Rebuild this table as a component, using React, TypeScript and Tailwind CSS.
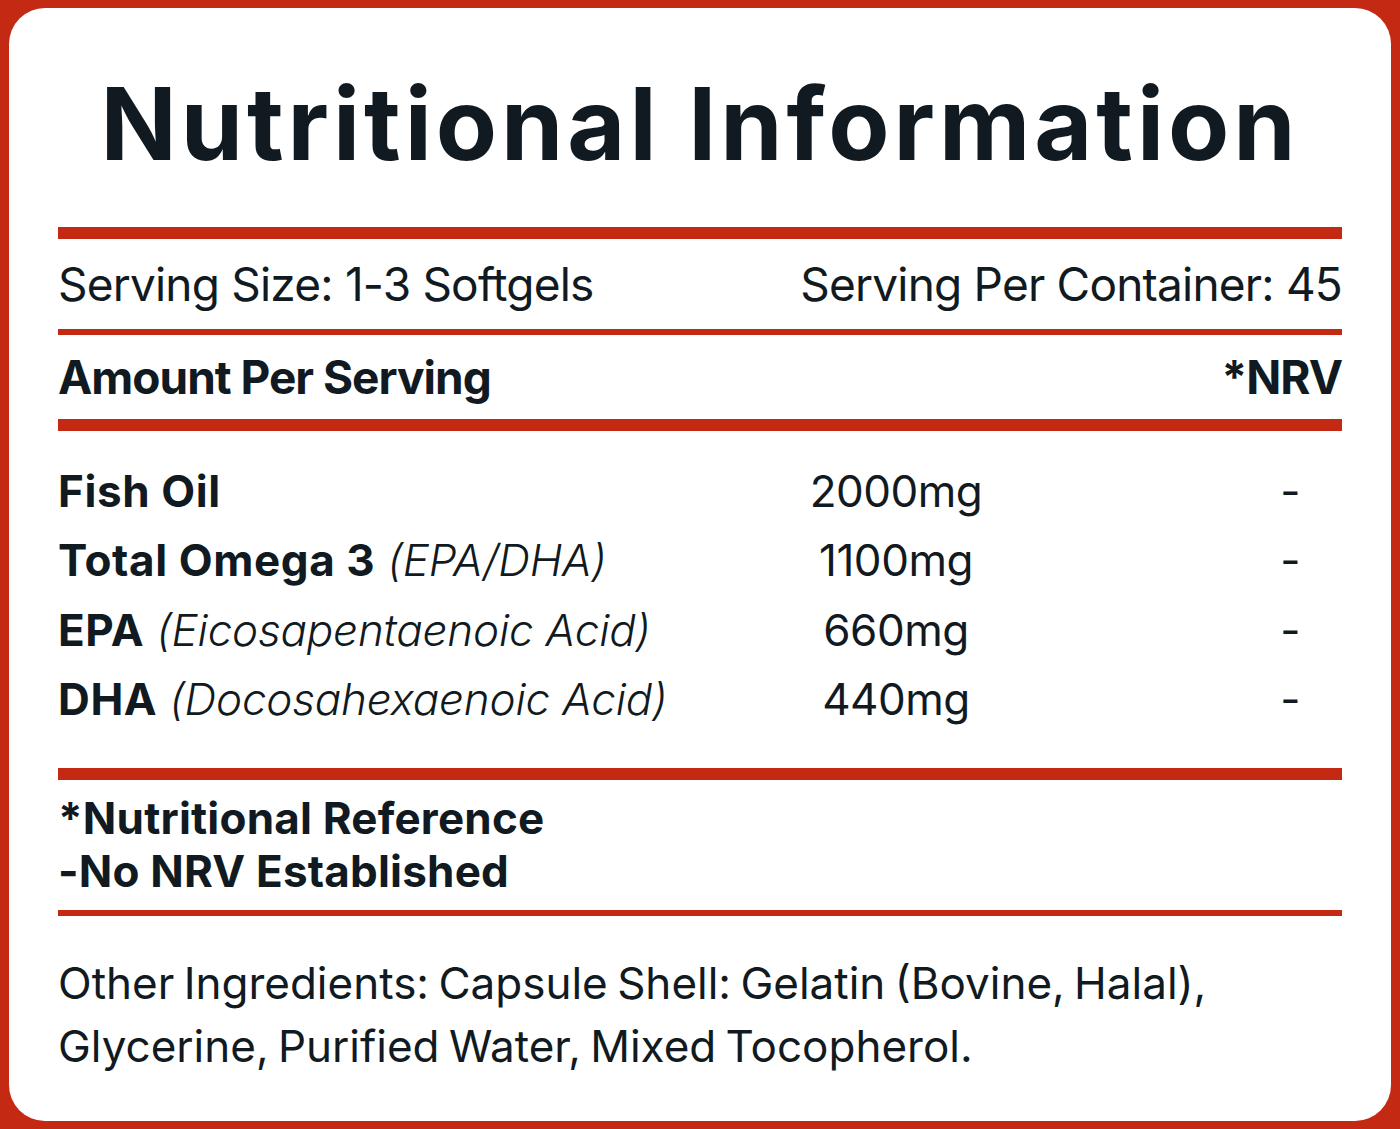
import React from 'react';

const rows = [
  { name: 'Fish Oil', note: '', amount: '2000mg' },
  { name: 'Total Omega 3', note: '(EPA/DHA)', amount: '1100mg' },
  { name: 'EPA', note: '(Eicosapentaenoic Acid)', amount: '660mg' },
  { name: 'DHA', note: '(Docosahexaenoic Acid)', amount: '440mg' },
];

export default function App() {
  return (
    <div className="w-[1400px] h-[1129px] bg-[#c42914] px-[9px] py-[8px] font-['Inter',sans-serif] text-[#111a21]">
      <div className="h-full bg-white rounded-[36px] px-[49px]">
        <h1 className="h-[219px] pt-[56px] text-center text-[100px] leading-[120px] font-bold tracking-[4px]">
          Nutritional Information
        </h1>
        <div className="h-[12px] bg-[#c42914]" />
        <div className="h-[90px] flex items-center justify-between text-[46px] tracking-[-0.8px]">
          <span>Serving Size: 1-3 Softgels</span>
          <span>Serving Per Container: 45</span>
        </div>
        <div className="h-[6px] bg-[#c42914]" />
        <div className="h-[84px] flex items-center justify-between text-[46px] font-bold tracking-[-1px]">
          <span>Amount Per Serving</span>
          <span>*NRV</span>
        </div>
        <div className="h-[12px] bg-[#c42914]" />
        <div className="pt-[25px] pb-[34px]">
          {rows.map((r) => (
            <div key={r.name} className="h-[69.5px] flex items-center text-[44px] tracking-[-0.5px]">
              <div className="w-[727px]">
                <span className="font-bold tracking-[0.6px]">{r.name}</span>
                {r.note && <span className="italic font-light tracking-[-0.2px]"> {r.note}</span>}
              </div>
              <div className="w-[222px] text-center">{r.amount}</div>
              <div className="ml-auto w-[104px] text-center">-</div>
            </div>
          ))}
        </div>
        <div className="h-[12px] bg-[#c42914]" />
        <div className="py-[12px] text-[44px] leading-[53px] font-bold tracking-[0.2px]">
          <div>*Nutritional Reference</div>
          <div>-No NRV Established</div>
        </div>
        <div className="h-[6px] bg-[#c42914]" />
        <div className="pt-[36px] text-[44px] leading-[63px] tracking-[0px] [word-spacing:-3px]">
          <div>Other Ingredients: Capsule Shell: Gelatin (Bovine, Halal),</div>
          <div>Glycerine, Purified Water, Mixed Tocopherol.</div>
        </div>
      </div>
    </div>
  );
}
